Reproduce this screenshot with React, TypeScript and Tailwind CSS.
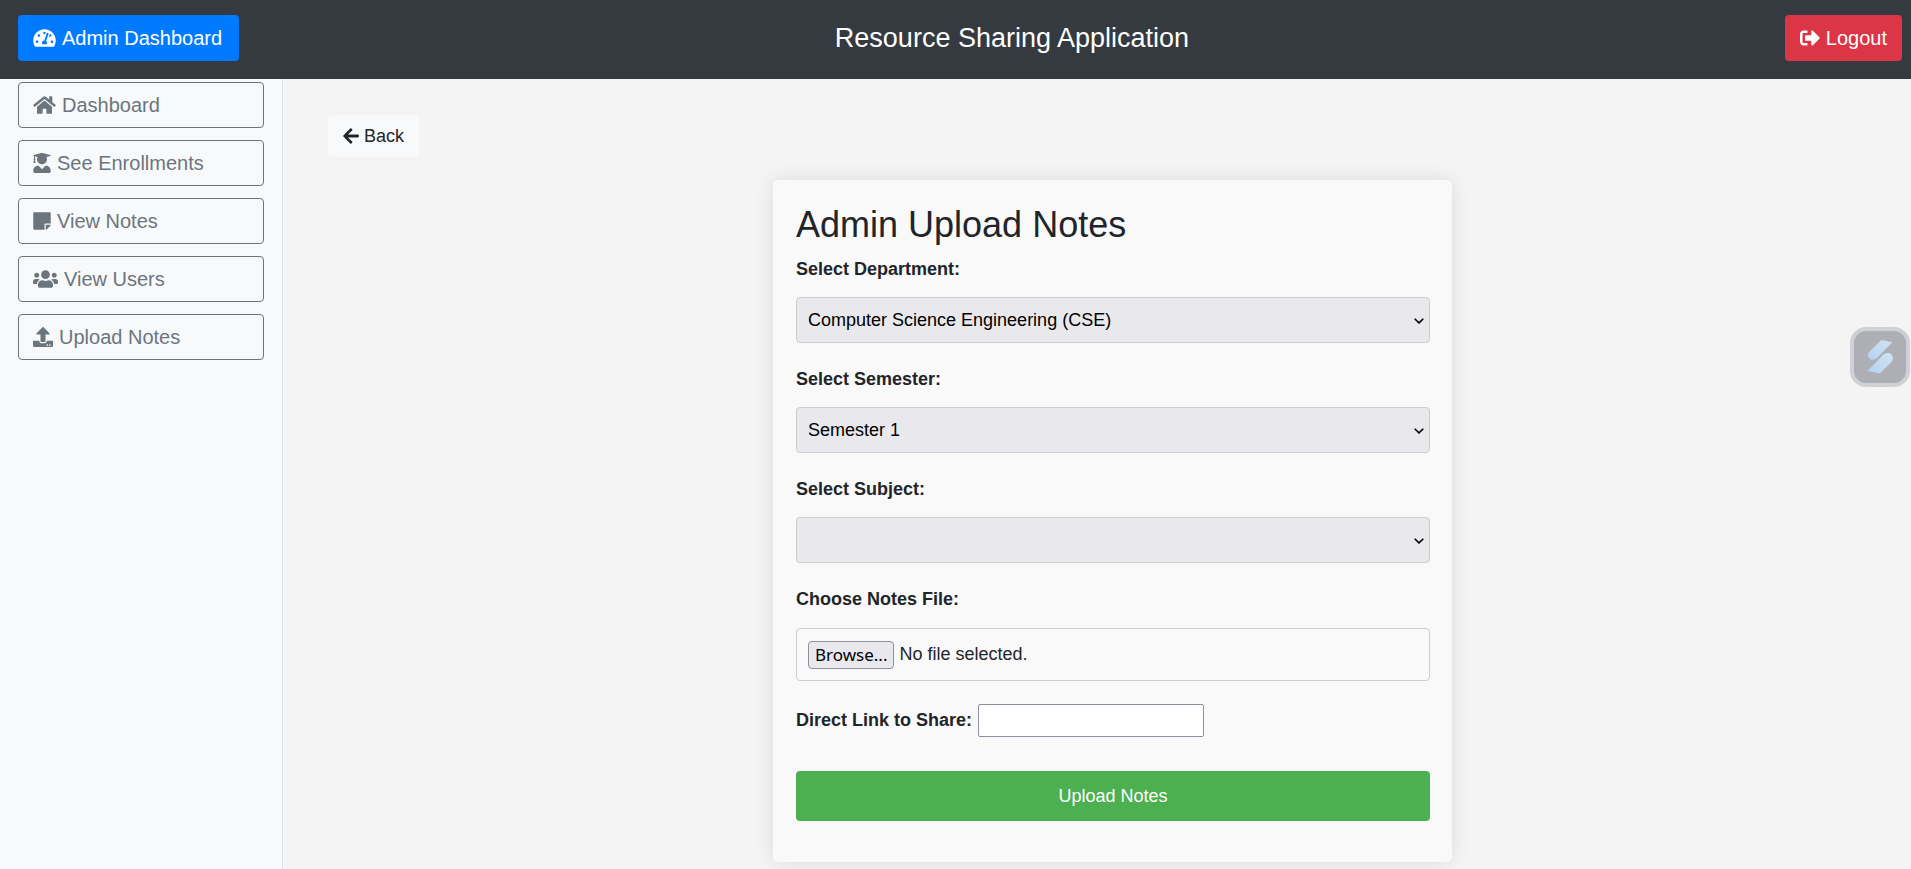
import { useState } from "react";
import type { ReactNode } from "react";
import type { IconType } from "react-icons";
import {
  FaArrowLeft,
  FaHome,
  FaSignOutAlt,
  FaStickyNote,
  FaTachometerAlt,
  FaUpload,
  FaUserGraduate,
  FaUsers,
} from "react-icons/fa";

const links: { label: string; icon: IconType; size: string }[] = [
  { label: "Dashboard", icon: FaHome, size: "h-5 w-[23px]" },
  { label: "See Enrollments", icon: FaUserGraduate, size: "h-5 w-[18px]" },
  { label: "View Notes", icon: FaStickyNote, size: "h-5 w-[18px]" },
  { label: "View Users", icon: FaUsers, size: "h-5 w-[25px]" },
  { label: "Upload Notes", icon: FaUpload, size: "h-5 w-5" },
];

function SelectField({ id, label, children }: { id: string; label: string; children?: ReactNode }) {
  return (
    <div className="mb-[23px]">
      <label htmlFor={id} className="mb-[14px] block font-bold">
        {label}
      </label>
      <div className="grid items-center">
        <select
          id={id}
          className="col-start-1 row-start-1 h-[46px] w-full appearance-none rounded border border-[#ccc] bg-[#e9e9ed] px-[11px] text-black"
        >
          {children}
        </select>
        <svg
          viewBox="0 0 10 6"
          className="pointer-events-none col-start-1 row-start-1 mt-px mr-[6px] h-[6px] w-[10px] justify-self-end"
          fill="none"
          stroke="#000"
          strokeWidth="1.6"
          aria-hidden="true"
        >
          <path d="M.7.7 5 4.9 9.3.7" />
        </svg>
      </div>
    </div>
  );
}

export default function App() {
  const [fileName, setFileName] = useState("No file selected.");

  return (
    <div className="flex min-h-screen flex-col bg-[#f4f4f4] font-['Liberation_Sans',Arial,sans-serif] text-[18px] leading-[27px] text-[#212529]">
      <header className="flex h-[79px] items-center justify-between bg-[#343a40] pr-[9px] pb-[3px] pl-[18px] text-white">
        <a
          href="#admin"
          className="flex h-[46px] items-center gap-[6px] rounded bg-[#007bff] pr-[17px] pl-[15px] text-[20px]"
        >
          <FaTachometerAlt className="h-5 w-[23px]" />
          Admin Dashboard
        </a>
        <h1 className="text-[27px]">Resource Sharing Application</h1>
        <button type="button" className="flex h-[46px] items-center gap-[6px] rounded bg-[#dc3545] px-[15px] text-[20px]">
          <FaSignOutAlt className="h-5 w-5" />
          Logout
        </button>
      </header>

      <div className="flex grow">
        <nav className="flex w-[283px] shrink-0 flex-col gap-3 border-r border-[#dee2e6] bg-[#f8f9fa] px-[18px] pt-[3px]">
          {links.map(({ label, icon: Icon, size }) => (
            <a
              key={label}
              href="#"
              className="flex min-h-[46px] items-center gap-[6px] rounded border border-[#6c757d] px-[14px] text-[20px] text-[#6c757d]"
            >
              <Icon className={size} />
              {label}
            </a>
          ))}
        </nav>

        <main className="grow pt-9 pr-[14px] pl-[45px]">
          <button type="button" className="flex h-[42px] items-center gap-[5px] rounded bg-[#f8f9fa] px-[15px]">
            <FaArrowLeft className="h-[18px] w-4" />
            Back
          </button>

          <form
            className="mx-auto mt-[23px] w-full max-w-[679px] rounded-[5px] bg-[#f9f9f9] pt-[23px] pr-[22px] pb-[41px] pl-[23px] shadow-[0_0_20px_rgba(0,0,0,0.1)]"
            onSubmit={(e) => e.preventDefault()}
          >
            <h2 className="mb-[10px] text-[36px] leading-[43px]">Admin Upload Notes</h2>

            <SelectField id="department" label="Select Department:">
              <option>Computer Science Engineering (CSE)</option>
            </SelectField>
            <SelectField id="semester" label="Select Semester:">
              <option>Semester 1</option>
            </SelectField>
            <SelectField id="subject" label="Select Subject:" />

            <label htmlFor="file" className="mb-[15px] block font-bold">
              Choose Notes File:
            </label>
            <label
              htmlFor="file"
              className="relative mb-[23px] flex h-[53px] items-center gap-[5px] rounded border border-[#ccc] px-[11px]"
            >
              <input
                id="file"
                type="file"
                className="sr-only"
                onChange={(e) => setFileName(e.target.files?.[0]?.name ?? "No file selected.")}
              />
              <span className="flex h-7 items-center rounded border border-[#8f8f9d] bg-[#e9e9ed] px-[6px] font-['Noto_Sans',sans-serif] text-[17px] text-black">
                Browse...
              </span>
              <span>{fileName}</span>
            </label>

            <div className="mb-[34px] flex items-center gap-[6px]">
              <label htmlFor="link" className="font-bold">
                Direct Link to Share:
              </label>
              <input
                id="link"
                type="text"
                className="h-[33px] w-[226px] rounded-[2px] border border-[#8f8f9d] bg-white px-1"
              />
            </div>

            <button type="submit" className="h-[50px] w-full rounded bg-[#4caf50] text-white">
              Upload Notes
            </button>
          </form>
        </main>
      </div>

      <button
        type="button"
        aria-label="Open assistant"
        className="fixed top-[327px] right-px size-[60px] rounded-2xl border-4 border-[#d0d1d5] bg-[#aeafb5]"
      >
        <svg viewBox="0 0 52 52" className="size-full" aria-hidden="true">
          <defs>
            <linearGradient id="blade" x1="0" y1="1" x2="1" y2="0">
              <stop offset="0" stopColor="#b3d2f2" />
              <stop offset="1" stopColor="#d3e3f3" />
            </linearGradient>
          </defs>
          <path fill="url(#blade)" d="M27.500 9 38.300 11.300 23 27Q20.500 29.200 17.500 28.800 13.800 27.500 14 23.500 14.200 21.800 16 20Z" />
          <path fill="url(#blade)" d="M13.500 40 29 24Q31.500 21.400 35.300 22 38.800 23.500 38.900 27.500 38.700 29.500 37 31.500L26 42.600Z" />
        </svg>
      </button>
    </div>
  );
}
